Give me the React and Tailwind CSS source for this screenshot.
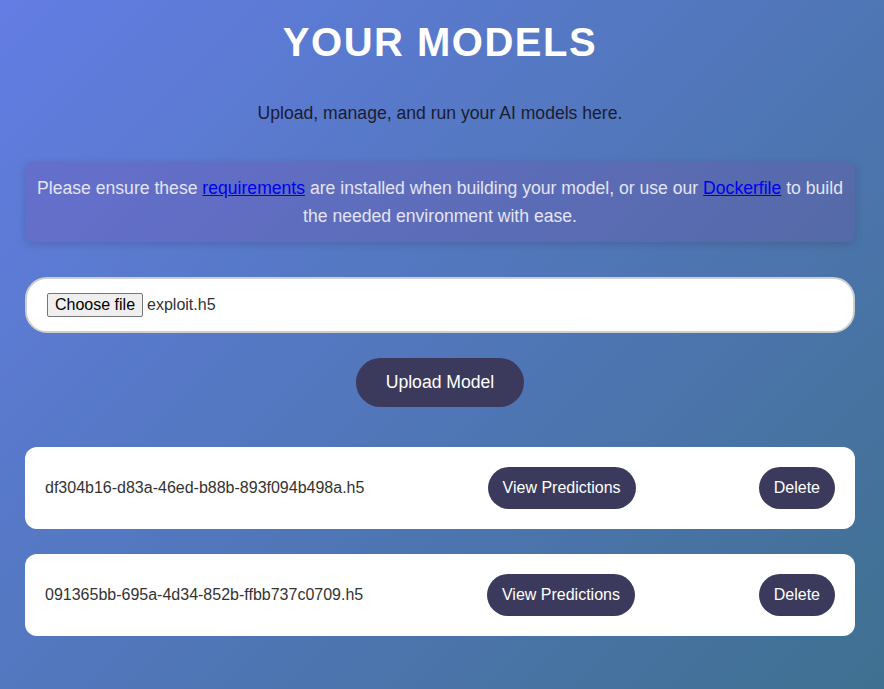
import React from 'react';

const models = [
  'df304b16-d83a-46ed-b88b-893f094b498a.h5',
  '091365bb-695a-4d34-852b-ffbb737c0709.h5'
];

const App = () => {
  return (
    <div className="min-h-[689px] bg-[linear-gradient(135deg,#637de4_0%,#3f7090_100%)] font-['Liberation_Sans',Arial,sans-serif] pl-[25px] pr-[29px] pt-[19px] pb-[54px]">
      {/* Header */}
      <h1 className="text-center text-[40px] leading-[46px] font-bold text-white tracking-[1.5px] uppercase">
        Your Models
      </h1>
      <p className="mt-[37px] text-center text-[17.6px] leading-[22px] text-[#1c1c30]">
        Upload, manage, and run your AI models here.
      </p>

      {/* Notice */}
      <div className="mt-[38px] rounded-lg bg-[rgba(118,75,162,0.25)] shadow-[0_2px_8px_rgba(0,0,0,0.15)] px-[10px] py-[12px] text-center text-[17.6px] leading-[28px] text-[#e4e4f4]">
        Please ensure these <a href="#" className="text-[#0000ee] underline">requirements</a> are installed when building your model, or use our <a href="#" className="text-[#0000ee] underline">Dockerfile</a> to build the needed environment with ease.
      </div>

      {/* Upload */}
      <div className="mt-[35px] flex items-center h-[56px] rounded-[22px] border-2 border-[#cfcfcf] bg-white px-[20px]">
        <span className="inline-flex items-center h-[24px] px-[7px] rounded-[2px] border border-[#767676] bg-[#efefef] text-[16px] text-black">
          Choose file
        </span>
        <span className="ml-[4px] text-[16px] text-[#333]">exploit.h5</span>
      </div>

      <div className="mt-[25px] flex justify-center">
        <button className="h-[49px] px-[30px] rounded-full bg-[#3b3a5c] text-white text-[17.6px]">
          Upload Model
        </button>
      </div>

      {/* Model list */}
      <div className="mt-[40px] flex flex-col gap-[25px]">
        {models.map((name) => (
          <div key={name} className="flex items-center justify-between rounded-xl bg-white p-5 h-[82px]">
            <span className="text-[16px] text-[#333]">{name}</span>
            <button className="h-[42px] px-[15px] rounded-full bg-[#3b3a5c] text-white text-[16px]">
              View Predictions
            </button>
            <button className="h-[42px] px-[15px] rounded-full bg-[#3b3a5c] text-white text-[16px]">
              Delete
            </button>
          </div>
        ))}
      </div>
    </div>
  );
};

export default App;
